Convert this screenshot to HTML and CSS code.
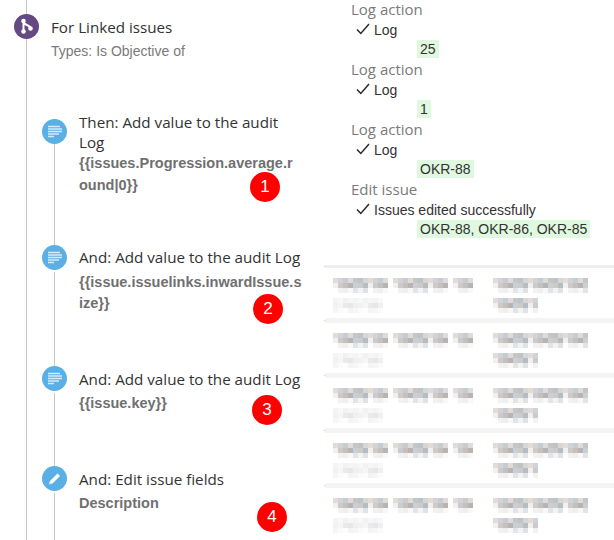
FILE: index.html
```html
<!DOCTYPE html>
<html lang="en">
<head>
  <meta charset="UTF-8">
  <meta name="viewport" content="width=device-width, initial-scale=1.0">
  <title>Audit log rule</title>
  <link rel="stylesheet" href="styles.css">
</head>
<body>
  <div class="page">
    <div class="rule">
      <div class="branch">
        <div class="icon-col">
          <span class="icon purple">
            <svg viewBox="0 0 25 25" width="25" height="25">
              <path d="M9.500 7V17.500M9.500 8c.5 3.500 7 2.500 7 6.500" fill="none" stroke="#fff" stroke-width="2"/>
              <circle cx="9.500" cy="7" r="2.300" fill="#fff"/>
              <circle cx="9.500" cy="17.500" r="2.300" fill="#fff"/>
              <circle cx="16.500" cy="14.500" r="2.300" fill="#fff"/>
            </svg>
          </span>
        </div>
        <div class="branch-text">
          <div class="title">For Linked issues</div>
          <div class="types">Types: Is Objective of</div>
        </div>
      </div>

      <div class="steps">
        <div class="step step-1">
          <div class="icon-col">
            <span class="icon blue">
              <svg viewBox="0 0 25 25" width="25" height="25"><path class="doc-lines" d="M6 7.500h12M6 10h14M6 12.500h14M6 15h11M6 17.500h6"/></svg>
            </span>
            <span class="line"></span>
          </div>
          <div class="step-text">
            <div class="title">Then: Add value to the audit Log</div>
            <div class="code">{{issues.Progression.average.r<br>ound|0}}</div>
          </div>
        </div>
        <div class="step step-2">
          <div class="icon-col">
            <span class="icon blue">
              <svg viewBox="0 0 25 25" width="25" height="25"><path class="doc-lines" d="M6 7.500h12M6 10h14M6 12.500h14M6 15h11M6 17.500h6"/></svg>
            </span>
            <span class="line"></span>
          </div>
          <div class="step-text">
            <div class="title">And: Add value to the audit Log</div>
            <div class="code">{{issue.issuelinks.inwardIssue.s<br>ize}}</div>
          </div>
        </div>
        <div class="step step-3">
          <div class="icon-col">
            <span class="icon blue">
              <svg viewBox="0 0 25 25" width="25" height="25"><path class="doc-lines" d="M6 7.500h12M6 10h14M6 12.500h14M6 15h11M6 17.500h6"/></svg>
            </span>
            <span class="line"></span>
          </div>
          <div class="step-text">
            <div class="title">And: Add value to the audit Log</div>
            <div class="code">{{issue.key}}</div>
          </div>
        </div>
        <div class="step step-4">
          <div class="icon-col">
            <span class="icon blue">
              <svg viewBox="0 0 25 25" width="25" height="25">
                <path d="M15.500 7.500l2.500 2.500-7.500 7.500-3 .6.500-3z" fill="#fff"/>
                <path d="M7.500 15.500l2.200 2.200-2.800.700z" fill="#cfe6f6"/>
              </svg>
            </span>
            <span class="line"></span>
          </div>
          <div class="step-text">
            <div class="title">And: Edit issue fields</div>
            <div class="code">Description</div>
          </div>
        </div>
      </div>
    </div>

    <div class="audit">
      <div class="log">
        <div class="log-name">Log action</div>
        <div class="log-result"><svg class="tick" viewBox="0 0 14 12" width="14" height="12"><path d="M1 6.500l3.800 4L13 1"/></svg>Log</div>
        <div class="log-value"><span>25</span></div>
        <div class="log-name">Log action</div>
        <div class="log-result"><svg class="tick" viewBox="0 0 14 12" width="14" height="12"><path d="M1 6.500l3.800 4L13 1"/></svg>Log</div>
        <div class="log-value"><span>1</span></div>
        <div class="log-name">Log action</div>
        <div class="log-result"><svg class="tick" viewBox="0 0 14 12" width="14" height="12"><path d="M1 6.500l3.800 4L13 1"/></svg>Log</div>
        <div class="log-value"><span>OKR-88</span></div>
        <div class="log-name">Edit issue</div>
        <div class="log-result"><svg class="tick" viewBox="0 0 14 12" width="14" height="12"><path d="M1 6.500l3.800 4L13 1"/></svg>Issues edited successfully</div>
        <div class="log-value"><span>OKR-88, OKR-86, OKR-85</span></div>
      </div>

      <div class="table">
        <div class="sep"></div>
        <div class="row"><div class="cell"><div class="line-a"><i class="w1"></i><i class="w2"></i><i class="w3"></i></div><div class="line-b"><i class="w4 pale"></i></div></div><div class="cell"><div class="line-a"><i class="w5"></i></div><div class="line-b"><i class="w6"></i></div></div></div>
        <div class="sep"></div>
        <div class="row"><div class="cell"><div class="line-a"><i class="w1"></i><i class="w2"></i><i class="w3"></i></div><div class="line-b"><i class="w4 pale"></i></div></div><div class="cell"><div class="line-a"><i class="w5"></i></div><div class="line-b"><i class="w6"></i></div></div></div>
        <div class="sep"></div>
        <div class="row"><div class="cell"><div class="line-a"><i class="w1"></i><i class="w2"></i><i class="w3"></i></div><div class="line-b"><i class="w4 pale"></i></div></div><div class="cell"><div class="line-a"><i class="w5"></i></div><div class="line-b"><i class="w6"></i></div></div></div>
        <div class="sep"></div>
        <div class="row"><div class="cell"><div class="line-a"><i class="w1"></i><i class="w2"></i><i class="w3"></i></div><div class="line-b"><i class="w4 pale"></i></div></div><div class="cell"><div class="line-a"><i class="w5"></i></div><div class="line-b"><i class="w6"></i></div></div></div>
        <div class="sep"></div>
        <div class="row"><div class="cell"><div class="line-a"><i class="w1"></i><i class="w2"></i><i class="w3"></i></div><div class="line-b"><i class="w4 pale"></i></div></div><div class="cell"><div class="line-a"><i class="w5"></i></div><div class="line-b"><i class="w6"></i></div></div></div>
      </div>
    </div>

    <span class="marker m1">1</span>
    <span class="marker m2">2</span>
    <span class="marker m3">3</span>
    <span class="marker m4">4</span>
  </div>
</body>
</html>
```

FILE: styles.css
```css
html, body {
  margin: 0;
  background: #ffffff;
}

.page {
  position: relative;
  display: flex;
  width: 614px;
  height: 540px;
  overflow: hidden;
  font-family: "Liberation Sans", Arial, sans-serif;
  font-size: 14px;
  color: #333333;
}

/* left column */
.rule {
  position: relative;
  width: 324px;
  flex: none;
  padding-left: 14px;
  box-sizing: border-box;
}

.rule::before {
  content: "";
  position: absolute;
  left: 26px;
  top: 0;
  bottom: 0;
  width: 1px;
  background: #c9c9c9;
}

.icon {
  position: relative;
  display: block;
  width: 25px;
  height: 25px;
  border-radius: 50%;
}

.icon svg {
  display: block;
}

.purple {
  background: #654982;
}

.blue {
  background: #5aafe4;
}

.doc-lines {
  fill: none;
  stroke: #d5ebf9;
  stroke-width: 1.500;
}

.icon-col {
  display: flex;
  flex-direction: column;
  align-items: center;
  width: 25px;
  flex: none;
}

.line {
  flex: 1;
  width: 1px;
  margin-top: 2px;
  background: #c9c9c9;
}

.branch {
  display: flex;
  gap: 12px;
  padding-top: 14px;
  height: 46px;
}

.branch-text {
  padding-top: 3px;
}

.title {
  font-family: "Open Sans", sans-serif;
  font-size: 15.200px;
  line-height: 20px;
  color: #333333;
}

.types {
  margin-top: 4px;
  line-height: 20px;
  font-size: 14px;
  color: #7a7a7a;
}

.steps {
  margin-left: 28px;
  position: relative;
}

.steps::before {
  content: "";
  position: absolute;
  left: 12px;
  top: 0;
  height: 57px;
  width: 1px;
  background: #c9c9c9;
}

.step {
  display: flex;
  gap: 12px;
}

.step-1 {
  margin-top: 59px;
  height: 126px;
}

.step-2 {
  height: 121px;
}

.step-3 {
  height: 100px;
}

.step-4 {
  height: 80px;
}

.step-text {
  width: 223px;
}

.step-1 .step-text {
  margin-top: -7px;
}

.step-1 .code {
  margin-top: 0;
  line-height: 22px;
}

.step-2 .step-text {
  padding-top: 2px;
}

.step-2 .code {
  margin-top: 5px;
}

.step-3 .step-text,
.step-4 .step-text {
  padding-top: 3px;
}

.code {
  margin-top: 4px;
  font-size: 14.500px;
  font-weight: bold;
  line-height: 21px;
  color: #707070;
  white-space: nowrap;
}

/* right column */
.audit {
  flex: 1;
}

.log {
  padding-left: 27px;
  line-height: 20px;
}

.log-name {
  height: 20px;
  font-family: "Open Sans", sans-serif;
  font-size: 15px;
  line-height: 18px;
  color: #7a7a7a;
}

.log-result {
  padding-left: 5px;
  color: #333333;
}

.tick {
  margin-right: 4px;
  fill: none;
  stroke: #2b2b2b;
  stroke-width: 1.500;
}

.log-value {
  height: 20px;
  padding-left: 66px;
}

.log-value span {
  display: block;
  width: fit-content;
  padding: 0 3px;
  line-height: 18px;
  background: #dff8df;
}

/* blurred table */
.table {
  margin-top: 25px;
}

.sep {
  position: relative;
  height: 5px;
  margin: 0 10px 0 1px;
  background: #f4f4f4;
}

.sep:first-child {
  height: 3px;
  background: #efefef;
}

.sep::before,
.sep::after {
  content: "";
  position: absolute;
  top: 2px;
  height: 1px;
  background: #cccccc;
}

.sep:first-child::before,
.sep:first-child::after {
  top: 1px;
}

.sep::before {
  right: 100%;
  width: 1px;
}

.sep::after {
  left: 100%;
  width: 10px;
}

.row {
  display: flex;
  height: 50px;
  padding: 10px 0 0 9px;
  box-sizing: border-box;
}

.cell {
  width: 160px;
}

.line-a, .line-b {
  display: flex;
  gap: 5px;
  height: 15px;
}

.line-b {
  margin-top: 5px;
}

.line-a i, .line-b i {
  display: block;
  height: 15px;
  background-repeat: no-repeat;
  background-size: 100% 5px;
  background-position: 0 0, 0 5px, 0 10px;
  background-image:
    repeating-linear-gradient(90deg, #e4dcd4 0 5px, #d2d2da 5px 10px, #c6ccd0 10px 15px, #dedcda 15px 20px, #c8c6c4 20px 25px, #bcc4ca 25px 30px, #d8d6d4 30px 35px),
    repeating-linear-gradient(90deg, #f2f0ee 0 5px, #cccaca 5px 10px, #c6c0bc 10px 15px, #b8b4b4 15px 20px, #c8d0d6 20px 25px, #d0cac6 25px 30px, #b4bcc4 30px 35px),
    repeating-linear-gradient(90deg, #ffffff 0 5px, #f2f2f2 5px 10px, #eef0f0 10px 15px, #f8f8f8 15px 20px, #e4e4e4 20px 25px, #f0f4f6 25px 30px, #e0e2e4 30px 35px);
}

.line-a i.pale, .line-b i.pale {
  background-image:
    repeating-linear-gradient(90deg, #f4f4f4 0 5px, #f8f8f8 5px 10px, #f2f2f2 10px 15px, #f6f6f6 15px 20px),
    repeating-linear-gradient(90deg, #f2f2f2 0 5px, #f6f6f6 5px 10px, #eaeaea 10px 15px, #e4e8ea 15px 20px, #f0f0f0 20px 25px),
    repeating-linear-gradient(90deg, #f6f6f6 0 5px, #fbfbfb 5px 10px, #fdfdfd 10px 15px, #f4f4f4 15px 20px);
}

.w1 { width: 55px; }
.w2 { width: 55px; }
.w3 { width: 20px; }
.w4 { width: 50px; }
.w5 { width: 95px; }
.w6 { width: 45px; }

/* numbered annotations */
.marker {
  position: absolute;
  width: 30px;
  height: 30px;
  border-radius: 50%;
  background: #ff0000;
  color: #ffffff;
  font-size: 17px;
  line-height: 30px;
  text-align: center;
}

.m1 { left: 250px; top: 172px; }
.m2 { left: 253px; top: 294px; }
.m3 { left: 252px; top: 395px; }
.m4 { left: 257px; top: 502px; }
```
